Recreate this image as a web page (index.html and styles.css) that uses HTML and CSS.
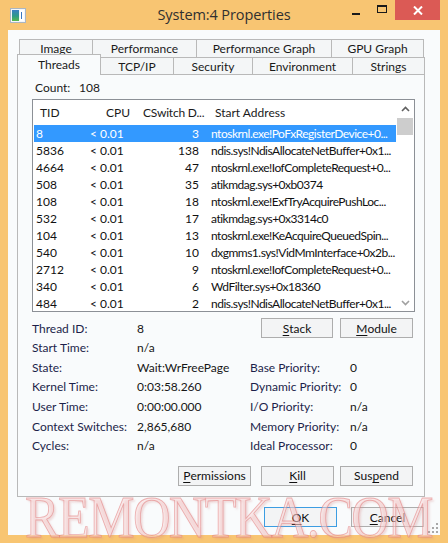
FILE: index.html
```html
<!DOCTYPE html>
<html>
<head>
<meta charset="utf-8">
<link rel="stylesheet" href="styles.css">
</head>
<body>
<div class="frame">
  <div class="titlebar">
    <div class="tb-left">
      <svg class="appicon" width="16" height="15" viewBox="0 0 16 15">
        <defs>
          <linearGradient id="g1" x1="0" y1="0" x2="0" y2="1">
            <stop offset="0" stop-color="#3a7fc4"/>
            <stop offset="0.55" stop-color="#2f9a8a"/>
            <stop offset="1" stop-color="#58b84a"/>
          </linearGradient>
        </defs>
        <rect x="0.5" y="0.5" width="15" height="14" fill="#f4f7fa" stroke="#aab6c2"/>
        <rect x="2" y="2" width="7" height="11" fill="url(#g1)"/>
        <rect x="10" y="2" width="4" height="11" fill="#ffffff"/>
        <rect x="11" y="4" width="1" height="7" fill="#3a78c0"/>
      </svg>
    </div>
    <div class="title">System:4 Properties</div>
    <div class="tb-right">
      <div class="cap-btn cap-min"><span class="min-bar"></span></div>
      <div class="cap-btn cap-max"><span class="max-box"></span></div>
      <div class="cap-btn cap-close">
        <svg width="10" height="9" viewBox="0 0 10 9"><path d="M1 0.5 L9 8.5 M9 0.5 L1 8.5" stroke="#fff" stroke-width="2"/></svg>
      </div>
    </div>
  </div>

  <div class="client">
    <div class="tabs">
      <div class="tabrow back">
        <div class="tab w-image">Image</div>
        <div class="tab w-perf">Performance</div>
        <div class="tab w-pgraph">Performance Graph</div>
        <div class="tab w-gpu last">GPU Graph</div>
      </div>
      <div class="tabrow front">
        <div class="tab sel w-threads">Threads</div>
        <div class="tab w-tcp">TCP/IP</div>
        <div class="tab w-sec">Security</div>
        <div class="tab w-env">Environment</div>
        <div class="tab w-str">Strings</div>
      </div>
    </div>

    <div class="panel">
      <div class="count"><span class="count-label">Count:</span><span>108</span></div>

      <div class="list">
        <div class="list-main">
          <div class="lhead">
            <span class="h-tid">TID</span>
            <span class="h-cpu">CPU<svg class="sort" width="5" height="3" viewBox="0 0 5 3"><path d="M0 0 H5 L2.5 3 Z" fill="#9fb8d8"/></svg></span>
            <span class="h-cs">CSwitch D...</span>
            <span class="h-addr">Start Address</span>
          </div>
          <div class="row selected"><span class="c-tid">8</span><span class="c-cpu">&lt; 0.01</span><span class="c-cs">3</span><span class="c-addr">ntoskrnl.exe!PoFxRegisterDevice+0...</span></div>
          <div class="row"><span class="c-tid">5836</span><span class="c-cpu">&lt; 0.01</span><span class="c-cs">138</span><span class="c-addr">ndis.sys!NdisAllocateNetBuffer+0x1...</span></div>
          <div class="row"><span class="c-tid">4664</span><span class="c-cpu">&lt; 0.01</span><span class="c-cs">47</span><span class="c-addr">ntoskrnl.exe!IofCompleteRequest+0...</span></div>
          <div class="row"><span class="c-tid">508</span><span class="c-cpu">&lt; 0.01</span><span class="c-cs">35</span><span class="c-addr">atikmdag.sys+0xb0374</span></div>
          <div class="row"><span class="c-tid">108</span><span class="c-cpu">&lt; 0.01</span><span class="c-cs">18</span><span class="c-addr">ntoskrnl.exe!ExfTryAcquirePushLoc...</span></div>
          <div class="row"><span class="c-tid">532</span><span class="c-cpu">&lt; 0.01</span><span class="c-cs">17</span><span class="c-addr">atikmdag.sys+0x3314c0</span></div>
          <div class="row"><span class="c-tid">104</span><span class="c-cpu">&lt; 0.01</span><span class="c-cs">13</span><span class="c-addr">ntoskrnl.exe!KeAcquireQueuedSpin...</span></div>
          <div class="row"><span class="c-tid">540</span><span class="c-cpu">&lt; 0.01</span><span class="c-cs">10</span><span class="c-addr">dxgmms1.sys!VidMmInterface+0x2b...</span></div>
          <div class="row"><span class="c-tid">2712</span><span class="c-cpu">&lt; 0.01</span><span class="c-cs">9</span><span class="c-addr">ntoskrnl.exe!IofCompleteRequest+0...</span></div>
          <div class="row"><span class="c-tid">340</span><span class="c-cpu">&lt; 0.01</span><span class="c-cs">6</span><span class="c-addr">WdFilter.sys+0x18360</span></div>
          <div class="row"><span class="c-tid">484</span><span class="c-cpu">&lt; 0.01</span><span class="c-cs">2</span><span class="c-addr">ndis.sys!NdisAllocateNetBuffer+0x1...</span></div>
        </div>
        <div class="scrollbar">
          <div class="sb-arrow">
            <svg width="9" height="6" viewBox="0 0 9 6"><path d="M1 5 L4.5 1.5 L8 5" fill="none" stroke="#606060" stroke-width="1.6"/></svg>
          </div>
          <div class="sb-thumb"></div>
          <div class="sb-track"></div>
          <div class="sb-arrow">
            <svg width="9" height="6" viewBox="0 0 9 6"><path d="M1 1 L4.5 4.5 L8 1" fill="none" stroke="#a0a0a0" stroke-width="1.6"/></svg>
          </div>
        </div>
      </div>

      <div class="info">
        <span class="lbl">Thread ID:</span><span class="val">8</span>
        <div class="btn-pair">
          <div class="btn"><u>S</u>tack</div>
          <div class="btn btn-module"><u>M</u>odule</div>
        </div>

        <span class="lbl">Start Time:</span><span class="val">n/a</span><span></span><span></span>

        <span class="lbl">State:</span><span class="val">Wait:WrFreePage</span>
        <span class="lbl">Base Priority:</span><span class="val">0</span>

        <span class="lbl">Kernel Time:</span><span class="val">0:03:58.260</span>
        <span class="lbl">Dynamic Priority:</span><span class="val">0</span>

        <span class="lbl">User Time:</span><span class="val">0:00:00.000</span>
        <span class="lbl">I/O Priority:</span><span class="val">n/a</span>

        <span class="lbl">Context Switches:</span><span class="val">2,865,680</span>
        <span class="lbl">Memory Priority:</span><span class="val">n/a</span>

        <span class="lbl">Cycles:</span><span class="val">n/a</span>
        <span class="lbl">Ideal Processor:</span><span class="val">0</span>
      </div>

      <div class="actions">
        <div class="btn btn-perm"><u>P</u>ermissions</div>
        <div class="btn btn-kill"><u>K</u>ill</div>
        <div class="btn">Sus<u>p</u>end</div>
      </div>
    </div>

    <div class="dlg-btns">
      <div class="btn btn-ok"><u>O</u>K</div>
      <div class="btn"><u>C</u>ancel</div>
    </div>

    <svg class="grip" width="10" height="10" viewBox="0 0 10 10">
      <g fill="#a8a8a8">
        <rect x="8" y="0" width="2" height="2"/>
        <rect x="4" y="4" width="2" height="2"/><rect x="8" y="4" width="2" height="2"/>
        <rect x="0" y="8" width="2" height="2"/><rect x="4" y="8" width="2" height="2"/><rect x="8" y="8" width="2" height="2"/>
      </g>
    </svg>

    <div class="watermark">REMONTKA.COM</div>
  </div>
</div>
</body>
</html>
```

FILE: styles.css
```css
* { box-sizing: border-box; }

html, body {
  margin: 0;
  padding: 0;
  width: 448px;
  height: 543px;
  overflow: hidden;
}

body {
  font-family: Lato, "Liberation Sans", sans-serif;
  font-size: 12px;
  color: #1a1a1a;
}

.frame {
  width: 448px;
  height: 543px;
  background: #f8c572;
  display: flex;
  flex-direction: column;
}

/* ---------- title bar ---------- */
.titlebar {
  height: 30px;
  display: grid;
  grid-template-columns: 1fr auto 1fr;
  align-items: start;
}

.tb-left { padding: 8px 0 0 10px; }
.appicon { display: block; }

.title {
  font-family: "Open Sans", Lato, sans-serif;
  font-size: 14.5px;
  color: #303030;
  line-height: 30px;
  letter-spacing: -0.1px;
}

.tb-right {
  display: flex;
  justify-content: flex-end;
  padding-right: 8px;
}

.cap-btn {
  height: 20px;
  display: flex;
  align-items: center;
  justify-content: center;
}
.cap-min { width: 26px; }
.cap-max { width: 26px; }
.cap-close { width: 45px; background: #db5a55; }

.min-bar {
  width: 8px;
  height: 2px;
  background: #1a1a1a;
  margin-top: 8px;
}
.max-box {
  width: 10px;
  height: 8px;
  border: 1px solid #1a1a1a;
  border-top-width: 2px;
  margin-top: -2px;
}

/* ---------- client ---------- */
.client {
  position: relative;
  margin: 0 8px 8px;
  height: 505px;
  background: #f9fbfc;
  display: flex;
  flex-direction: column;
}

/* tabs */
.tabs {
  height: 44px;
  display: flex;
  flex-direction: column;
  padding-top: 9px;
}

.tabrow { display: flex; }
.tabrow.back { margin-left: 11px; height: 18px; }
.tabrow.front { margin-left: 9px; height: 17px; align-items: flex-end; }

.tab {
  height: 100%;
  display: flex;
  align-items: center;
  justify-content: center;
  border-top: 1px solid #b9b9b9;
  color: #1a1a1a;
  background: #f4f6f7;
}

.back .tab { border-left: 1px solid #b9b9b9; }
.back .tab.last { border-right: 1px solid #b9b9b9; }

.front .tab { border-right: 1px solid #b9b9b9; height: 17px; padding-top: 1px; }
.front .tab.sel {
  height: 21px;
  margin-bottom: -1px;
  border-left: 1px solid #b9b9b9;
  background: #f9fbfc;
  position: relative;
  z-index: 2;
  padding-top: 0;
  padding-bottom: 2px;
}

.w-image { width: 73px; }
.w-perf { width: 104px; }
.w-pgraph { width: 135px; }
.w-gpu { width: 93px; }
.w-threads { width: 84px; }
.w-tcp { width: 73px; }
.w-sec { width: 79px; }
.w-env { width: 100px; }
.w-str { width: 72px; }

/* panel */
.panel {
  margin-left: 9px;
  width: 408px;
  height: 423px;
  border: 1px solid #b9b9b9;
  background: #f9fbfc;
  display: flex;
  flex-direction: column;
  position: relative;
  z-index: 1;
}

.count {
  margin: 6px 0 0 17px;
  height: 14px;
  line-height: 14px;
  display: flex;
}
.count-label { width: 44px; }

/* list */
.list {
  margin: 4px 0 0 14px;
  width: 383px;
  height: 213px;
  border: 1px solid #8c9096;
  background: #ffffff;
  display: flex;
  overflow: hidden;
}

.list-main {
  width: 364px;
  padding-left: 1px;
  overflow: hidden;
}

.lhead {
  height: 25px;
  display: flex;
  align-items: center;
  color: #1a1a1a;
}
.h-tid { width: 72px; padding-left: 6px; }
.h-cpu { width: 37px; position: relative; }
.h-cs { width: 72px; letter-spacing: -0.2px; }
.h-addr { flex: 1; }

.sort {
  position: absolute;
  left: 1px;
  top: -10px;
}

.row {
  height: 17px;
  width: 362px;
  display: flex;
  align-items: center;
  white-space: nowrap;
  color: #111;
}
.row.selected { background: #3399ff; color: #ffffff; }

.c-tid { width: 56px; padding-left: 2px; }
.c-cpu { width: 33px; text-align: right; }
.c-cs { width: 76px; text-align: right; }
.c-addr {
  flex: 1;
  margin-left: 12px;
  overflow: hidden;
  letter-spacing: -0.5px;
}

.scrollbar {
  width: 17px;
  display: flex;
  flex-direction: column;
  background: #ffffff;
}
.sb-arrow {
  height: 17px;
  display: flex;
  align-items: center;
  justify-content: center;
}
.sb-thumb {
  height: 17px;
  margin: 1px 1px 0 0;
  background: #cdcdcd;
}
.sb-track { flex: 1; }

/* info grid */
.info {
  margin: 6px 0 0 14px;
  display: grid;
  grid-template-columns: 105px 113px 100px 1fr;
  grid-template-rows: 20px repeat(6, 19.6px);
  align-items: center;
}
.lbl { color: #1c1f4a; }
.val { color: #161616; }

.btn-pair {
  grid-column: 3 / 5;
  display: flex;
  margin-left: 11px;
  gap: 7px;
}

.btn {
  width: 73px;
  height: 20px;
  border: 1px solid #adadad;
  background: #f3f4f5;
  display: flex;
  align-items: center;
  justify-content: center;
  color: #111;
}
.btn-pair .btn:first-child { width: 72px; }
.btn u { text-decoration-thickness: 1px; text-underline-offset: 2px; }

.actions {
  margin-top: 10px;
  display: flex;
  justify-content: flex-end;
  padding-right: 11px;
}
.btn-perm { margin-right: 10px; }
.btn-kill { margin-right: 6px; }

/* dialog buttons */
.dlg-btns {
  margin-top: 10px;
  display: flex;
  justify-content: flex-end;
  gap: 14px;
  padding-right: 16px;
}
.btn-ok { border-color: #3c9de2; }

.grip {
  position: absolute;
  right: 2px;
  bottom: 2px;
}

.watermark {
  position: absolute;
  left: 17px;
  top: 464px;
  font-family: "Liberation Serif", serif;
  font-size: 52px;
  line-height: 0.8;
  letter-spacing: -1.6px;
  color: rgba(250, 215, 215, 0.5);
  -webkit-text-stroke: 0.8px rgba(225, 120, 120, 0.55);
  text-shadow: 2px 2px 2px rgba(215, 140, 140, 0.3);
  transform: scaleY(1.12);
  transform-origin: left top;
  pointer-events: none;
  white-space: nowrap;
  z-index: 5;
}
```
